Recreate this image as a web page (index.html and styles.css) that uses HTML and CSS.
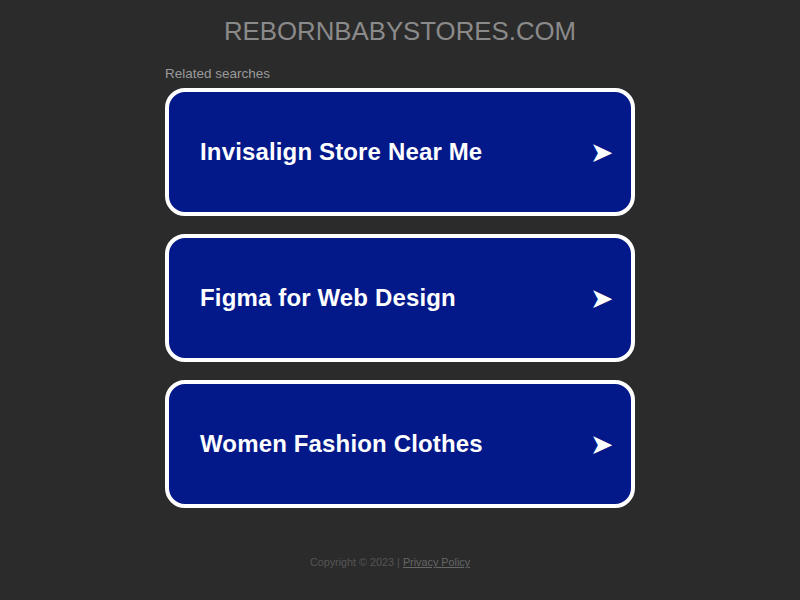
FILE: index.html
```html
<!doctype html>
<html>
<head>
    <title>rebornbabystores.com</title>
    <link rel="stylesheet" href="styles.css">
</head>
<body>
<div class="wrap">
    <h1 class="domain">REBORNBABYSTORES.COM</h1>
    <div class="related">Related searches</div>
    <div class="links">
        <a class="card" href="#"><span>Invisalign Store Near Me</span><span class="arrow">➤</span></a>
        <a class="card" href="#"><span>Figma for Web Design</span><span class="arrow">➤</span></a>
        <a class="card" href="#"><span>Women Fashion Clothes</span><span class="arrow">➤</span></a>
    </div>
    <div class="footer">Copyright © 2023 | <a href="#">Privacy Policy</a></div>
</div>
</body>
</html>
```
FILE: styles.css
```css
body{
    margin: 0;
    background-color: #2b2b2b;
    font-family: "Liberation Sans", Arial, sans-serif;
}
.wrap{
    width: 470px;
    margin: 0 auto;
}
.domain{
    margin: 0;
    padding-top: 16px;
    font-size: 25.8px;
    line-height: 30px;
    font-weight: normal;
    text-align: center;
    color: #8a8a8a;
}
.related{
    margin-top: 19px;
    font-size: 13.5px;
    line-height: 18px;
    color: #9a9a9a;
}
.links{
    display: flex;
    flex-direction: column;
    gap: 18px;
    margin-top: 5px;
}
.card{
    box-sizing: border-box;
    height: 128px;
    display: flex;
    align-items: center;
    justify-content: space-between;
    padding: 0 18px 0 31px;
    border: 4px solid #fff;
    border-radius: 20px;
    background-color: #03198a;
    color: #fff;
    text-decoration: none;
    font-size: 24px;
    letter-spacing: 0.15px;
    font-weight: bold;
}
.arrow{
    font-size: 28px;
    font-weight: normal;
}
.footer{
    margin-top: 48px;
    padding-right: 20px;
    text-align: center;
    font-size: 10.8px;
    color: #555;
}
.footer a{
    color: #666;
}
```
